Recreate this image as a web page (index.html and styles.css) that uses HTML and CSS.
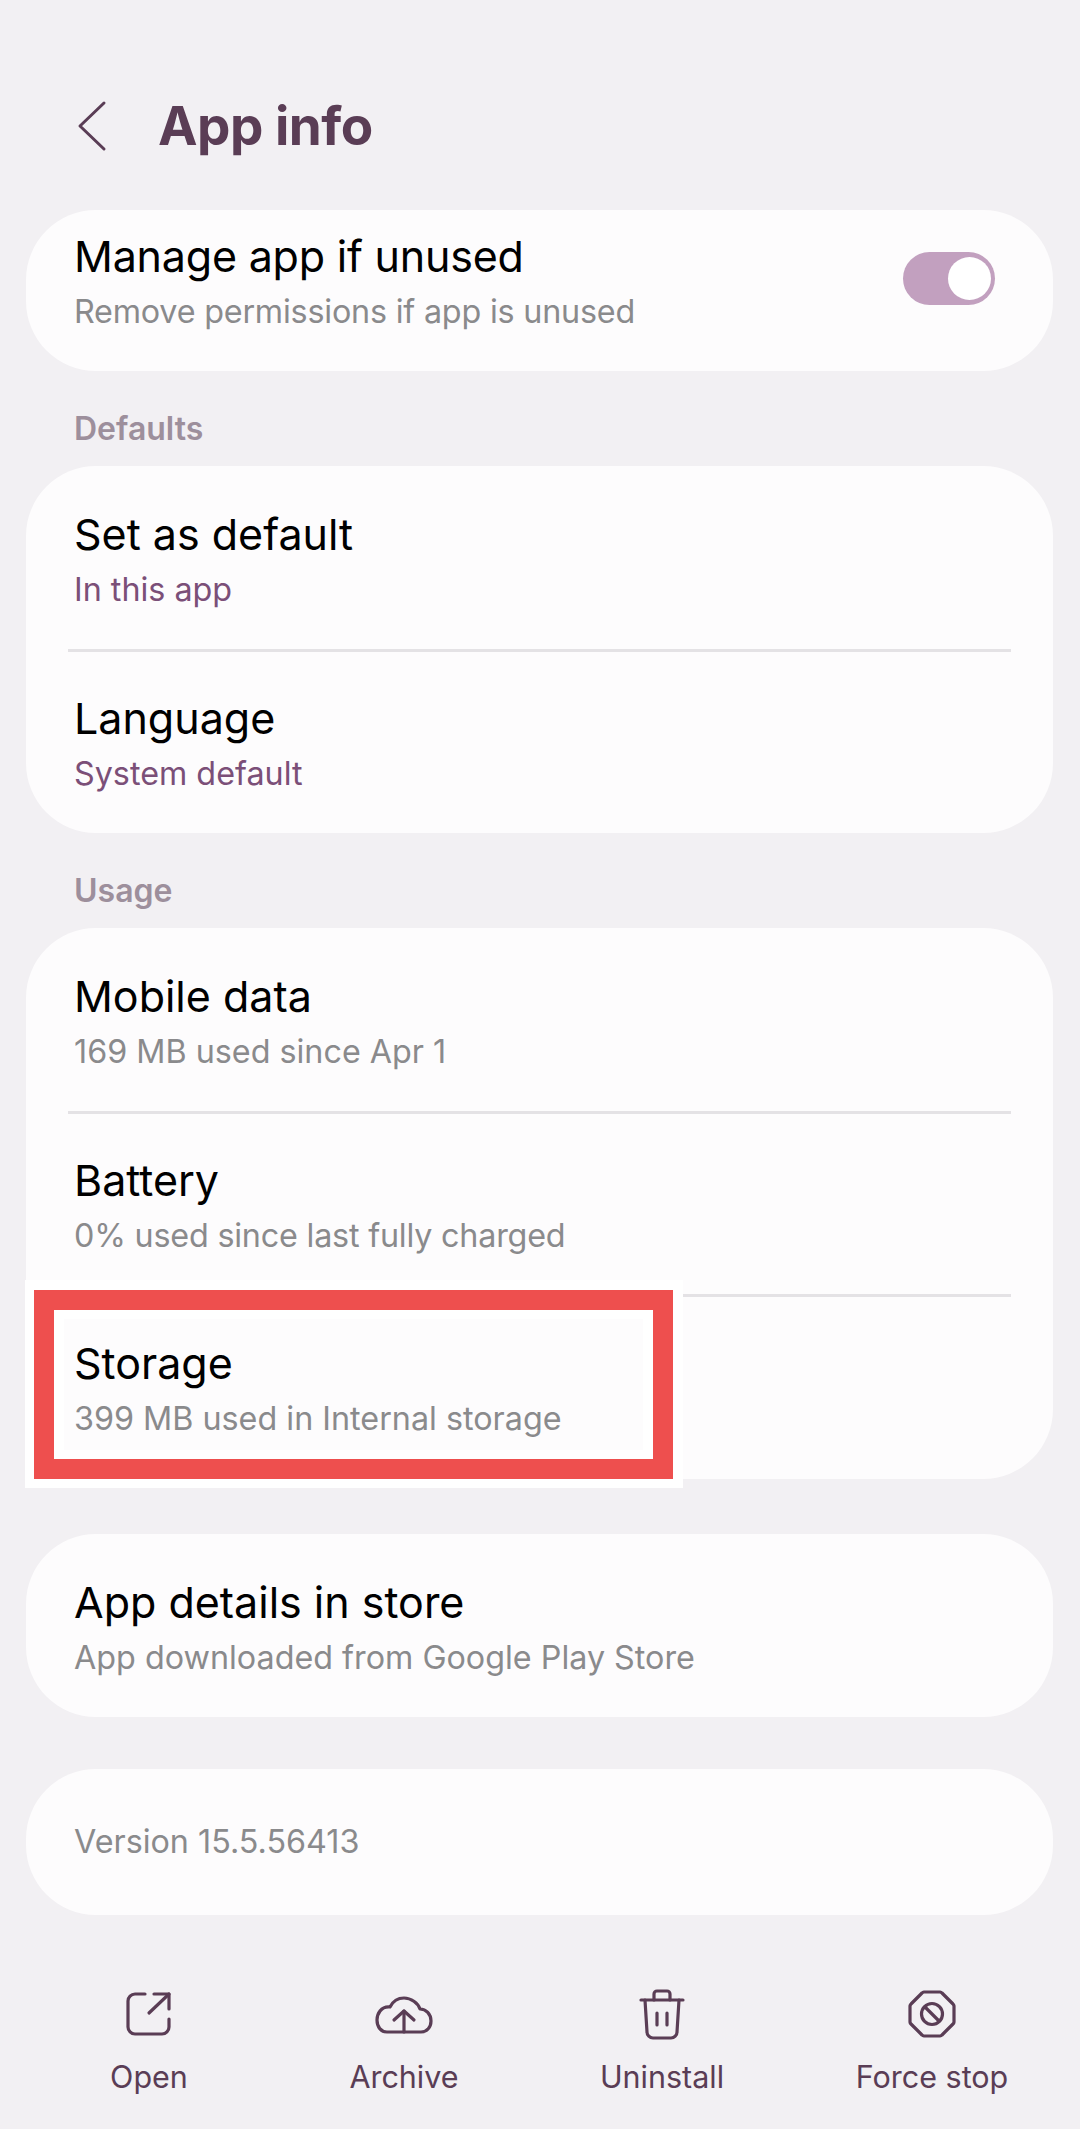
FILE: index.html
```html
<!DOCTYPE html>
<html lang="en">
<head>
<meta charset="utf-8">
<title>App info</title>
<link rel="stylesheet" href="styles.css">
</head>
<body>
<div class="screen">
  <header class="appbar">
    <svg class="back" viewBox="0 0 30 52" width="30" height="52" fill="none" stroke="#5a3d55" stroke-width="3" stroke-linecap="round" stroke-linejoin="round"><path d="M27 3 3 26l24 23"/></svg>
    <h1 class="title">App info</h1>
  </header>

  <section class="card card-first">
    <div class="first-text">
      <div class="item-title tight">Manage app if unused</div>
      <div class="item-sub tight">Remove permissions if app is unused</div>
    </div>
    <div class="toggle"><span class="thumb"></span></div>
  </section>

  <div class="label label-defaults">Defaults</div>
  <section class="card">
    <div class="row">
      <div class="item-title">Set as default</div>
      <div class="item-sub accent">In this app</div>
    </div>
    <div class="divider"></div>
    <div class="row">
      <div class="item-title">Language</div>
      <div class="item-sub accent">System default</div>
    </div>
  </section>

  <div class="label label-usage">Usage</div>
  <section class="card">
    <div class="row">
      <div class="item-title">Mobile data</div>
      <div class="item-sub">169 MB used since Apr 1</div>
    </div>
    <div class="divider"></div>
    <div class="row">
      <div class="item-title">Battery</div>
      <div class="item-sub tight">0% used since last fully charged</div>
    </div>
    <div class="divider"></div>
    <div class="row row-marked">
      <div class="mark"></div>
      <div class="item-title">Storage</div>
      <div class="item-sub">399 MB used in Internal storage</div>
    </div>
  </section>

  <section class="card card-store">
    <div class="row">
      <div class="item-title">App details in store</div>
      <div class="item-sub">App downloaded from Google Play Store</div>
    </div>
  </section>

  <section class="card card-version">
    <div class="item-sub">Version 15.5.56413</div>
  </section>

  <nav class="actions">
    <div class="action">
      <svg viewBox="0 0 50 54" width="50" height="54" fill="none" stroke="#5a3d55" stroke-width="3.2" stroke-linecap="round" stroke-linejoin="round"><path d="M21 7H11a7 7 0 0 0-7 7v26a7 7 0 0 0 7 7h27a7 7 0 0 0 7-7v-8"/><path d="M30 7h15v15"/><path d="M45 7 25 26"/></svg>
      <span>Open</span>
    </div>
    <div class="action">
      <svg viewBox="0 0 58 54" width="58" height="54" fill="none" stroke="#5a3d55" stroke-width="3.2" stroke-linecap="round" stroke-linejoin="round"><path d="M12 45h34c6 0 10-5 10-11 0-7-5-12-11-12-2-6-9-11-16-11-6 0-11 3-14 9-9-1-13 7-13 13 0 7 4 12 10 12z"/><path d="M29 45V24"/><path d="M19 33 29 24l10 9"/></svg>
      <span>Archive</span>
    </div>
    <div class="action">
      <svg viewBox="0 0 50 54" width="50" height="54" fill="none" stroke="#5a3d55" stroke-width="3.2" stroke-linecap="round" stroke-linejoin="round"><path d="M4 13h42"/><path d="M17 13V7a3 3 0 0 1 3-3h10a3 3 0 0 1 3 3v6"/><path d="M8 13l2 32a6 6 0 0 0 6 6h18a6 6 0 0 0 6-6l2-32"/><path d="M20 26v12M30 26v12"/></svg>
      <span>Uninstall</span>
    </div>
    <div class="action">
      <svg viewBox="0 0 50 54" width="50" height="54" fill="none" stroke="#5a3d55" stroke-width="3.2" stroke-linecap="round" stroke-linejoin="round"><path d="M17 5h16a3 3 0 0 1 2 1l11 11a3 3 0 0 1 1 2v16a3 3 0 0 1-1 2L35 48a3 3 0 0 1-2 1H17a3 3 0 0 1-2-1L4 37a3 3 0 0 1-1-2V19a3 3 0 0 1 1-2L15 6a3 3 0 0 1 2-1z"/><circle cx="25" cy="27" r="10.5"/><path d="M18 20l14 14"/></svg>
      <span>Force stop</span>
    </div>
  </nav>
</div>
</body>
</html>
```

FILE: styles.css
```css
*, *::before, *::after { box-sizing: border-box; }
html, body { margin: 0; padding: 0; }
body {
  background: #f2f0f3;
  font-family: Inter, "Noto Sans", sans-serif;
  width: 1080px;
  height: 2129px;
  overflow: hidden;
}
.screen {
  display: flex;
  flex-direction: column;
  height: 2129px;
  padding: 0 27px 0 26px;
}
.appbar {
  display: flex;
  align-items: center;
  height: 210px;
  padding: 42px 0 0 51px;
}
.back { flex: none; }
.title {
  margin: 0 0 0 51px;
  font-size: 53px;
  font-weight: 700;
  color: #5a3d55;
  letter-spacing: -0.5px;
}
.card {
  background: #fdfcfd;
  border-radius: 70px;
  flex: none;
}
.card-first {
  display: flex;
  justify-content: space-between;
  height: 161px;
  padding: 0 58px 0 48px;
}
.first-text { padding-top: 21px; }
.toggle {
  position: relative;
  width: 92px;
  height: 53px;
  margin-top: 42px;
  border-radius: 27px;
  background: #c2a0bf;
}
.thumb {
  position: absolute;
  top: 5px;
  right: 4px;
  width: 43px;
  height: 43px;
  border-radius: 50%;
  background: #fff;
}
.item-title {
  font-size: 43px;
  line-height: 50px;
  color: #000;
}
.item-sub {
  margin-top: 7px;
  font-size: 32.3px;
  line-height: 48px;
  color: #8a8a8c;
}
.tight { letter-spacing: -0.2px; }
.accent { color: #7b4f78; }
.label {
  flex: none;
  padding-left: 48px;
  font-size: 32px;
  font-weight: 600;
  line-height: 40px;
  color: #9d8f9c;
}
.label-defaults { margin-top: 38px; height: 57px; }
.label-usage { margin-top: 38px; height: 57px; }
.row {
  height: 183.5px;
  padding: 43px 48px 0;
}
.divider {
  height: 3px;
  margin: -1px 42px -2px;
  background: #e4e2e5;
}
.row-marked { position: relative; }
.row-marked > .item-title, .row-marked > .item-sub { position: relative; }
.mark {
  position: absolute;
  left: -1px;
  top: -15px;
  width: 658px;
  height: 208px;
  border: solid #fff;
  border-width: 10px 10px 9px 9px;
}
.mark::before {
  content: "";
  display: block;
  height: 100%;
  border: 20px solid #ee4f4e;
  background: #fff;
}
.mark::after {
  content: "";
  position: absolute;
  inset: 29px 30px;
  background: #fdfcfd;
}
.card-store { margin-top: 55px; }
.card-version {
  margin-top: 52px;
  height: 146px;
  padding: 0 48px;
  display: flex;
  align-items: center;
}
.card-version .item-sub { margin-top: 0; }
.actions {
  flex: none;
  display: grid;
  grid-template-columns: 252px 258px 258px 282px;
  margin: 72px 0 0 -3px;
}
.action {
  display: flex;
  flex-direction: column;
  align-items: center;
  font-size: 30.5px;
  color: #5a3d55;
}
.action svg { flex: none; }
.action span { margin-top: 16px; line-height: 40px; }
```
